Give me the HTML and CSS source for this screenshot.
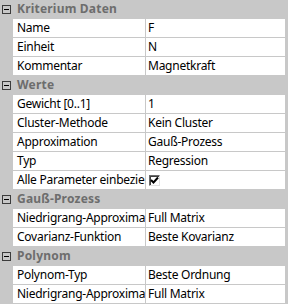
FILE: index.html
```html
<!DOCTYPE html>
<html lang="de">
<head>
  <meta charset="UTF-8" />
  <title>Eigenschaften</title>
  <link rel="stylesheet" href="styles.css">
</head>
<body>
  <div class="grid">
    <div class="cat"><span class="toggle"></span>Kriterium Daten</div>
    <div class="prop"><div class="name">Name</div><div class="value">F</div></div>
    <div class="prop"><div class="name">Einheit</div><div class="value">N</div></div>
    <div class="prop"><div class="name">Kommentar</div><div class="value">Magnetkraft</div></div>

    <div class="cat"><span class="toggle"></span>Werte</div>
    <div class="prop"><div class="name">Gewicht [0..1]</div><div class="value">1</div></div>
    <div class="prop"><div class="name">Cluster-Methode</div><div class="value">Kein Cluster</div></div>
    <div class="prop"><div class="name">Approximation</div><div class="value">Gauß-Prozess</div></div>
    <div class="prop"><div class="name">Typ</div><div class="value">Regression</div></div>
    <div class="prop">
      <div class="name">Alle Parameter einbeziehen</div>
      <div class="value">
        <span class="check">
          <svg width="9" height="9" viewBox="0 0 9 9"><path d="M1 4 L3.5 6.5 L8 1.5" fill="none" stroke="#000" stroke-width="2"/></svg>
        </span>
      </div>
    </div>

    <div class="cat"><span class="toggle"></span>Gauß-Prozess</div>
    <div class="prop"><div class="name">Niedrigrang-Approximation</div><div class="value">Full Matrix</div></div>
    <div class="prop"><div class="name">Covarianz-Funktion</div><div class="value">Beste Kovarianz</div></div>

    <div class="cat"><span class="toggle"></span>Polynom</div>
    <div class="prop"><div class="name">Polynom-Typ</div><div class="value">Beste Ordnung</div></div>
    <div class="prop"><div class="name">Niedrigrang-Approximation</div><div class="value">Full Matrix</div></div>
  </div>
</body>
</html>
```

FILE: styles.css
```css
body {
  margin: 0;
  background: #c8c8c8;
  font-family: "Noto Sans", Arial, sans-serif;
  font-size: 12px;
  color: #000;
}

.grid {
  display: flex;
  flex-direction: column;
  gap: 1px;
  width: 288px;
}

.cat {
  height: 18px;
  line-height: 18px;
  display: flex;
  align-items: center;
  font-weight: bold;
  color: #6d6d6d;
  letter-spacing: 0.2px;
}

.toggle {
  position: relative;
  box-sizing: border-box;
  width: 9px;
  height: 9px;
  margin: 0 6px 0 2px;
  border: 1px solid #3c3c3c;
  background: #c8c8c8;
}

.toggle::after {
  content: "";
  position: absolute;
  left: 1px;
  top: 3px;
  width: 5px;
  height: 1px;
  background: #000;
}

.prop {
  display: grid;
  grid-template-columns: 132px 139px;
  column-gap: 1px;
  margin-left: 13px;
  height: 18px;
  line-height: 18px;
  letter-spacing: -0.25px;
}

.name,
.value {
  background: #fff;
  white-space: nowrap;
  overflow: hidden;
}

.name {
  padding-left: 4px;
}

.value {
  padding-left: 2px;
  display: flex;
  align-items: center;
}

.check {
  box-sizing: border-box;
  width: 11px;
  height: 11px;
  margin-left: 1px;
  border: 1px solid;
  border-color: #6b6b6b #e2e2e2 #e2e2e2 #6b6b6b;
  box-shadow: inset 1px 1px 0 #404040;
  background: #fff;
  display: flex;
  align-items: center;
  justify-content: center;
}
```
